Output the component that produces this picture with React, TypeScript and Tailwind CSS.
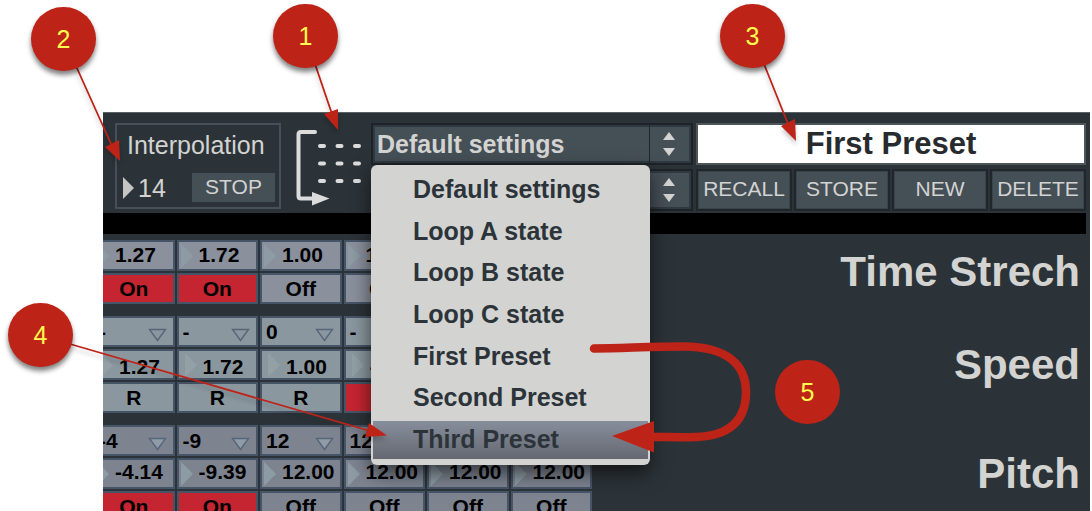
import React from 'react';

type GroupKind = 'stretch' | 'speed' | 'pitch';

interface Track {
    step?: string;
    value: string;
    state: string;
    active?: boolean;
}

interface TrackGroup {
    kind: GroupKind;
    label: string;
    tracks: Track[];
}

const PRESETS = [
    'Default settings',
    'Loop A state',
    'Loop B state',
    'Loop C state',
    'First Preset',
    'Second Preset',
    'Third Preset',
];

const ACTIONS = ['RECALL', 'STORE', 'NEW', 'DELETE'];

const GROUPS: TrackGroup[] = [
    {
        kind: 'stretch',
        label: 'Time Strech',
        tracks: [
            { value: '1.27', state: 'On', active: true },
            { value: '1.72', state: 'On', active: true },
            { value: '1.00', state: 'Off' },
            { value: '1.00', state: 'Off' },
            { value: '', state: '' },
            { value: '', state: '' },
        ],
    },
    {
        kind: 'speed',
        label: 'Speed',
        tracks: [
            { step: '-', value: '1.27', state: 'R' },
            { step: '-', value: '1.72', state: 'R' },
            { step: '0', value: '1.00', state: 'R' },
            { step: '-', value: '-1.00', state: '', active: true },
            { step: '', value: '', state: '' },
            { step: '', value: '', state: '' },
        ],
    },
    {
        kind: 'pitch',
        label: 'Pitch',
        tracks: [
            { step: '-4', value: '-4.14', state: 'On', active: true },
            { step: '-9', value: '-9.39', state: 'On', active: true },
            { step: '12', value: '12.00', state: 'Off' },
            { step: '12', value: '12.00', state: 'Off' },
            { step: '', value: '12.00', state: 'Off' },
            { step: '', value: '12.00', state: 'Off' },
        ],
    },
];

const FILL: Record<GroupKind, string> = {
    stretch: 'bg-[#8b909d]',
    speed: 'bg-[#8a979f]',
    pitch: 'bg-[#7d8490]',
};

const VALUE_PADDING: Record<GroupKind, string> = {
    stretch: 'pl-5 pb-0.5',
    speed: 'pl-6 pt-1',
    pitch: 'pl-5 pb-1',
};

const CELL = 'w-full min-w-0 h-[31px] rounded-none border-2 border-[#465467] text-[21px] leading-none font-bold text-black';

const TrackColumn: React.FC<{ kind: GroupKind; track: Track; name: string }> = ({ kind, track, name }) => (
    <div className="flex min-w-0 flex-col gap-0.5">
        {track.step !== undefined && (
            <div className="relative">
                <select aria-label={`${name} step`} className={`block appearance-none pl-1 ${CELL} ${FILL[kind]}`}>
                    <option>{track.step}</option>
                </select>
                <svg className="pointer-events-none absolute right-2 top-3" width="19" height="14" viewBox="0 0 19 14">
                    <path d="M1.5 1.5h16L9.500 12.500z" fill={kind === 'pitch' ? '#8f9ca5' : '#8a979f'} stroke="#566579" strokeWidth="1.400" />
                </svg>
            </div>
        )}
        <div className="relative">
            <input aria-label={`${name} value`} defaultValue={track.value} className={`block ${CELL} ${FILL[kind]} ${VALUE_PADDING[kind]}`} />
            <svg className={`pointer-events-none absolute top-1 ${kind === 'speed' ? 'left-2' : 'left-1'}`} width="12" height="24" viewBox="0 0 12 24">
                <path d="M0 0l12 12L0 24z" fill={kind === 'speed' ? '#93a0a6' : '#8c9ba4'} />
            </svg>
        </div>
        <button type="button" aria-label={track.state ? undefined : `${name} state`} className={`${CELL} ${track.active ? 'bg-[#c42531]' : FILL[kind]}`}>
            {track.state}
        </button>
    </div>
);

const Stepper = () => (
    <svg className="pointer-events-none absolute right-0 top-0" width="44" height="42" viewBox="0 0 44 42">
        <path d="M0 2v38" stroke="#20262a" strokeWidth="2" />
        <path d="M14 17l6-8 6 8zM14 25h12l-6 8z" fill="#d3d3d1" />
    </svg>
);

const PresetSelect: React.FC<{ label: string }> = ({ label }) => (
    <div className="relative">
        <select
            aria-label={label}
            className="block h-[42px] w-full appearance-none rounded-none border-2 border-[#1d2327] bg-[#454f56] pl-1 text-[25px] leading-[38px] font-bold text-[#d3d3d1] shadow-[inset_0_0_0_2px_#30393f]"
        >
            {PRESETS.map((preset) => (
                <option key={preset}>{preset}</option>
            ))}
        </select>
        <Stepper />
    </div>
);

const RouteIcon = () => (
    <svg className="mt-1" width="66" height="82" viewBox="296 127 66 82" fill="none" stroke="#dcdcdc">
        <path d="M315 132h-14q-2.500 0-2.500 2.500V196q0 2.500 2.500 2.500H314" strokeWidth="4" strokeLinecap="round" />
        <path d="M312 192l17.500 6.500L312 205.500z" fill="#dcdcdc" stroke="none" />
        <path d="M320 146h4m13.500 0h4m13.500 0h4M320 163.500h4m13.500 0h4m13.500 0h4M320 181h4m13.500 0h4m13.500 0h4" strokeWidth="4" strokeLinecap="round" />
    </svg>
);

const PresetMenu = () => (
    <ul
        role="listbox"
        aria-label="Presets"
        className="absolute top-[42px] left-0 z-10 flex h-[300px] w-[279px] flex-col justify-between rounded-md bg-[#d3d3d1] px-0.5 py-1.5 text-[25px] leading-9 font-bold text-[#2c343a] shadow-[0_8px_20px_rgba(0,0,0,0.6)]"
    >
        {PRESETS.map((preset, i) => (
            <li
                key={preset}
                role="option"
                aria-selected={i === PRESETS.length - 1}
                className="h-[38px] pl-10 aria-selected:bg-linear-to-b aria-selected:from-[#878e9b] aria-selected:to-[#656872]"
            >
                {preset}
            </li>
        ))}
    </ul>
);

// Numbered notes pinned over the interface
const Annotations = () => (
    <>
        <svg className="pointer-events-none absolute top-0 left-0 z-20" width="1092" height="511" viewBox="0 0 1092 511">
            <g className="drop-shadow-[0_4px_2px_rgba(0,0,0,0.2)]" fill="#be2318" stroke="#be2318">
                <path d="M315 64l17 50M76 66l36 80M764 64l24 60M70 344l300 87" strokeWidth="1.800" fill="none" />
                <path d="M338 130l-14-16 14-5zM120 161l-15-14 14-7zM796 141l-15-15 14-7zM387 435.500l-22 1.500 4-14z" stroke="none" />
            </g>
            <path d="M594 348.500C620 348.500 650 346.500 684 346.500C726 347 746 364 746 392C746 422 728 436 696 437C680 437.500 666 437 652 437" fill="none" stroke="#be2318" strokeWidth="8.500" strokeLinecap="round" />
            <path d="M612 436l42-15v31.500z" fill="#be2318" />
        </svg>
        {[
            { n: 1, place: 'left-[273px] top-1' },
            { n: 2, place: 'left-[31px] top-[7px]' },
            { n: 3, place: 'left-[720px] top-1' },
            { n: 4, place: 'left-2 top-[303px]' },
            { n: 5, place: 'left-[775px] top-[360px]' },
        ].map(({ n, place }) => (
            <span
                key={n}
                className={`absolute z-20 flex h-16 w-[65px] items-center justify-center rounded-full bg-[#be2318] text-[25px] leading-none text-[#fffb4f] ${place} ${n === 5 ? '' : 'shadow-[0_4px_5px_rgba(0,0,0,0.5)]'}`}
            >
                {n}
            </span>
        ))}
    </>
);

export default function App() {
    return (
        <main className="relative h-screen overflow-hidden bg-white pt-28 pr-0.5 pl-[103px] font-['Liberation_Sans',Arial,sans-serif]">
            <section className="overflow-hidden border-t border-[#566266] bg-[#2c3338] pb-4">
                <header className="flex items-start pt-2.5 pr-1 pl-3">
                    <div className="h-[86px] w-[166px] shrink-0 border-2 border-[#465056] pt-1.5 pr-1 pl-1.5 text-[25px] leading-7 text-[#d3d3d1]">
                        <h2 className="pl-1">Interpolation</h2>
                        <div className="mt-3.5 flex items-center">
                            <svg width="11" height="22" viewBox="0 0 11 22">
                                <path d="M0 0l11 11L0 22z" fill="#c5c5c3" />
                            </svg>
                            <input aria-label="Interpolation time" defaultValue="14" className="w-9 min-w-0 flex-1 pl-1" />
                            <button type="button" className="h-[29px] w-[83px] bg-[#454f56] pb-0.5 text-[21px] leading-none">
                                STOP
                            </button>
                        </div>
                    </div>
                    <div className="ml-[15px] shrink-0">
                        <RouteIcon />
                    </div>
                    <div className="relative ml-[9px] flex w-[322px] shrink-0 flex-col gap-1">
                        <PresetSelect label="Current preset" />
                        <PresetSelect label="Target preset" />
                        <PresetMenu />
                    </div>
                    <div className="ml-[3px] flex min-w-0 flex-1 flex-col gap-1">
                        <input
                            aria-label="Preset name"
                            defaultValue="First Preset"
                            className="h-[42px] w-full border-2 border-[#4d5659] bg-white text-center text-[31px] leading-none font-bold text-[#272b2e]"
                        />
                        <div className="grid grid-cols-4 gap-0.5">
                            {ACTIONS.map((action) => (
                                <button
                                    key={action}
                                    type="button"
                                    className="h-[42px] border-2 border-[#20262a] bg-[#454f56] pb-1 text-[21px] leading-none text-[#d3d3d1] shadow-[inset_0_0_0_1px_#38434a]"
                                >
                                    {action}
                                </button>
                            ))}
                        </div>
                    </div>
                </header>
                <div className="mt-0.5 mr-1 h-[21px] bg-black" />
                <div className="mt-1.5 flex flex-col gap-3">
                    {GROUPS.map((group) => (
                        <div key={group.kind} className="flex items-center justify-between pr-2.5">
                            <div className="-ml-2.5 grid w-[499px] shrink-0 grid-cols-6 gap-0.5">
                                {group.tracks.map((track, i) => (
                                    <TrackColumn key={i} kind={group.kind} track={track} name={`${group.label} ${i + 1}`} />
                                ))}
                            </div>
                            <h3 className="text-[42px] leading-none font-bold text-[#d3d3d1]">{group.label}</h3>
                        </div>
                    ))}
                </div>
            </section>
            <Annotations />
        </main>
    );
}
